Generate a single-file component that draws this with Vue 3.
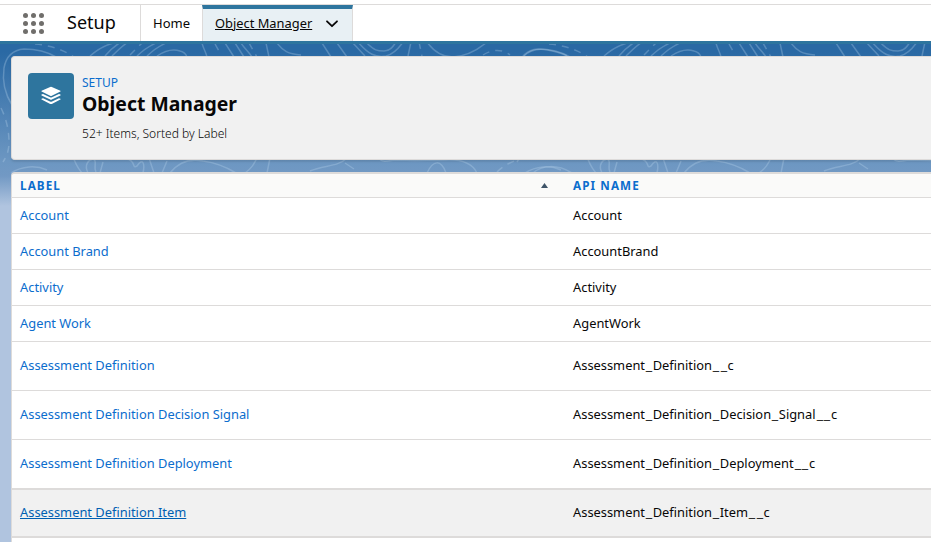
<script setup>
const rows = [
  { label: 'Account', api: 'Account' },
  { label: 'Account Brand', api: 'AccountBrand' },
  { label: 'Activity', api: 'Activity' },
  { label: 'Agent Work', api: 'AgentWork' },
  { label: 'Assessment Definition', api: 'Assessment_Definition__c', tall: true },
  { label: 'Assessment Definition Decision Signal', api: 'Assessment_Definition_Decision_Signal__c', tall: true },
  { label: 'Assessment Definition Deployment', api: 'Assessment_Definition_Deployment__c', tall: true },
  { label: 'Assessment Definition Item', api: 'Assessment_Definition_Item__c', tall: true, hover: true },
]
// Underscores are split out so that they can be spaced apart.
const parts = (name) => name.split(/(_)/).filter(Boolean)
const dots = [0, 1, 2, 3, 4, 5, 6, 7, 8]
const tiles = [0, 514]
const contours = [
  'M56 57C46 51 34 49 24 49C12 50 6 57 4 68C2 82 5 94 12 105',
  'M90 56C98 49 106 44 118 42M105 56C109 51 113 47 121 42M112 56C117 51 121 47 128 42M137 56C142 51 149 46 158 42M147 56C152 51 159 46 168 42',
  'M157 56C166 50 174 49 180 51C184 52 186 54 187 57',
  'M202 43C203 48 206 52 207 57M225 43L234 57M235 43L244 57M241 43C244 48 249 52 252 57M266 43L269 57',
  'M277 43C283 51 288 54 301 55M322 43L331 57M337 43L347 57',
  'M352 42L365 56M358 42C368 54 376 58 386 56C394 54 399 48 403 42M366 42C374 51 378 51 384 51C390 51 393 47 396 42M411 42L408 56',
  'M427 42C434 52 442 57 453 57C468 56 480 48 487 42',
  'M524 56C530 50 538 48 548 50C556 52 562 53 567 56',
  'M11 173C22 166 36 165 47 170M73 157C76 164 77 168 83 174M88 173C84 165 88 160 93 159C98 160 93 167 96 172M100 173L103 162M128 159C136 162 132 169 137 166C143 157 145 164 143 173M149 158L154 173M162 173L167 161',
  'M170 173C180 160 193 159 203 161C218 163 228 168 236 173M245 173C252 168 254 164 257 158M270 158L267 173',
  'M310 171C324 165 338 167 347 158M345 163L354 169M378 158C383 163 388 161 394 160C420 161 426 160 445 160C462 159 472 163 477 173M427 173C433 160 441 159 446 173',
  'M533 173C542 165 557 164 572 173',
]
const dashes = [
  'M35 44C48 45 62 49 74 57',
  'M130 55L142 43',
  'M215 44L219 51M249 43L257 57M419 42L422 56',
  'M483 55C492 49 503 49 510 55',
  'M1 108C6 118 9 130 9 142C9 150 7 156 3 162',
  'M497 172C503 166 511 162 517 160',
]
</script>

<template>
  <div class="page">
    <header class="nav">
      <div class="launcher"><i v-for="d in dots" :key="d"></i></div>
      <div class="app-name">Setup</div>
      <a class="tab home">Home</a>
      <a class="tab active">
        <span>Object Manager</span>
        <svg class="chevron" width="14" height="8" viewBox="0 0 14 8"><path d="M2 1.3L7 6.2L12 1.3" /></svg>
      </a>
    </header>
    <main class="content">
      <svg class="topo" width="931" height="542" viewBox="0 0 931 542">
        <g v-for="t in tiles" :key="t" :transform="`translate(${t} 0)`">
          <path v-for="c in contours" :key="c" :d="c" />
          <path v-for="c in dashes" :key="c" :d="c" stroke-dasharray="7 6" />
        </g>
      </svg>
      <section class="card">
        <div class="badge">
          <svg width="20" height="20" viewBox="0 0 20 20">
            <path d="M9.2.9Q10 .5 10.8.9L19.4 4.8Q20 5.2 19.4 5.6L10.8 9.7Q10 10.1 9.2 9.7L.6 5.6Q0 5.2.6 4.8Z" />
            <path d="M.6 8.6L2 8L9 11.3Q10 11.8 11 11.3L18 8L19.4 8.6Q20 9 19.4 9.4L10.8 13.5Q10 13.9 9.2 13.5L.6 9.4Q0 9 .6 8.6Z" />
            <path d="M.6 12.8L2 12.2L9 15.5Q10 16 11 15.5L18 12.2L19.4 12.8Q20 13.2 19.4 13.6L10.8 17.9Q10 18.3 9.2 17.9L.6 13.6Q0 13.2.6 12.8Z" />
          </svg>
        </div>
        <div class="heading">
          <div class="eyebrow">SETUP</div>
          <h1>Object Manager</h1>
          <p>52+ Items, Sorted by Label</p>
        </div>
      </section>
      <section class="list">
        <div class="row head">
          <div class="c1"><span>LABEL</span><i class="sort"></i></div>
          <div class="c2"><span>API NAME</span></div>
        </div>
        <div v-for="r in rows" :key="r.label" class="row" :class="{ tall: r.tall, hover: r.hover }">
          <div class="c1"><a>{{ r.label }}</a></div>
          <div class="c2"><span v-for="(p, i) in parts(r.api)" :key="i" :class="{ us: p === '_' }">{{ p }}</span></div>
        </div>
      </section>
    </main>
  </div>
</template>

<style>
body { margin: 0; overflow: hidden; }
</style>

<style scoped>
* { box-sizing: border-box; }
.page { width: 931px; height: 542px; overflow: hidden; padding-top: 4px; background: #fff; font-family: "Noto Sans", sans-serif; font-size: 13px; color: #080707; display: flex; flex-direction: column; }
.nav { display: flex; height: 40px; flex: none; border-top: 1px solid #dddbda; border-bottom: 3px solid #2e759e; }
.launcher { display: grid; grid-template-columns: repeat(3, 5px); grid-auto-rows: 5px; gap: 3px; padding: 8px 0 0 23px; width: 67px; }
.launcher i { border-radius: 50%; background: #706e6b; }
.app-name { width: 73px; font-size: 18px; line-height: 35px; }
.tab { display: flex; align-items: center; border-left: 1px solid #dddbda; padding-left: 12px; }
.home { width: 62px; }
.active { width: 151px; background: #e8f0f4; border-top: 4px solid #2e759e; border-right: 1px solid #dddbda; padding-bottom: 4px; font-size: 12.87px; }
.active span { text-decoration: underline; }
.chevron { margin: 2px 0 0 13px; fill: none; stroke: #080707; stroke-width: 1.8; stroke-linecap: round; stroke-linejoin: round; }
.content { position: relative; flex: 1; padding: 12px 0 0 11px; background: linear-gradient(#2a69a4 0, #2a69a4 8px, #6d97c2 118px, #7299c4 132px, #b0c4df 162px, #b0c4df 100%); }
.topo { position: absolute; left: 0; top: -44px; fill: none; stroke: rgba(190, 216, 240, .3); stroke-width: 1.5; clip-path: inset(44px 0 0 0); }
.card { position: relative; display: flex; height: 104px; border: 1px solid #dddbda; border-right: 0; border-radius: 4px 0 0 4px; background: #f1f1f1; padding: 16px; box-shadow: 0 2px 2px rgba(0, 0, 0, .1); }
.badge { width: 46px; height: 46px; border-radius: 4px; background: #2e759e; display: flex; align-items: center; justify-content: center; }
.badge svg { fill: #fff; }
.heading { padding-left: 8px; }
.eyebrow { color: #0b6dcd; line-height: 19px; font-size: 12px; }
h1 { margin: 0; font-size: 19.4px; line-height: 24px; font-weight: 700; }
p { margin: 9px 0 0; font-size: 12.05px; line-height: 18px; color: #080707; font-weight: 300; }
.list { position: relative; margin-top: 12px; border: 1px solid #dddbda; border-right: 0; border-top-width: 2px; border-radius: 4px 0 0 0; background: #fff; overflow: hidden; height: 390px; }
.row { display: flex; height: 36px; border-bottom: 1px solid #dddbda; align-items: center; padding-bottom: 2px; font-size: 12.87px; }
.tall { height: 49px; }
.head { height: 24px; padding-bottom: 1px; background: #fafaf9; color: #0b6dcd; font-weight: 700; font-size: 11.7px; letter-spacing: 1.1px; }
.c1 { display: flex; align-items: center; justify-content: space-between; width: 553px; padding: 0 17px 0 8px; }
.c2 { padding-left: 8px; }
.us { display: inline-block; padding: 0 1px; transform: scaleX(1.12); }
.row a { color: #0b6dcd; }
.sort { width: 7px; height: 5px; margin-top: 1px; background: #3e5468; clip-path: polygon(50% 0, 100% 100%, 0 100%); }
.hover { background: #f1f1f1; box-shadow: inset 0 1px #dddbda, inset 0 -1px #dddbda; }
.row.hover a { color: #005fb2; text-decoration: underline; }
</style>
